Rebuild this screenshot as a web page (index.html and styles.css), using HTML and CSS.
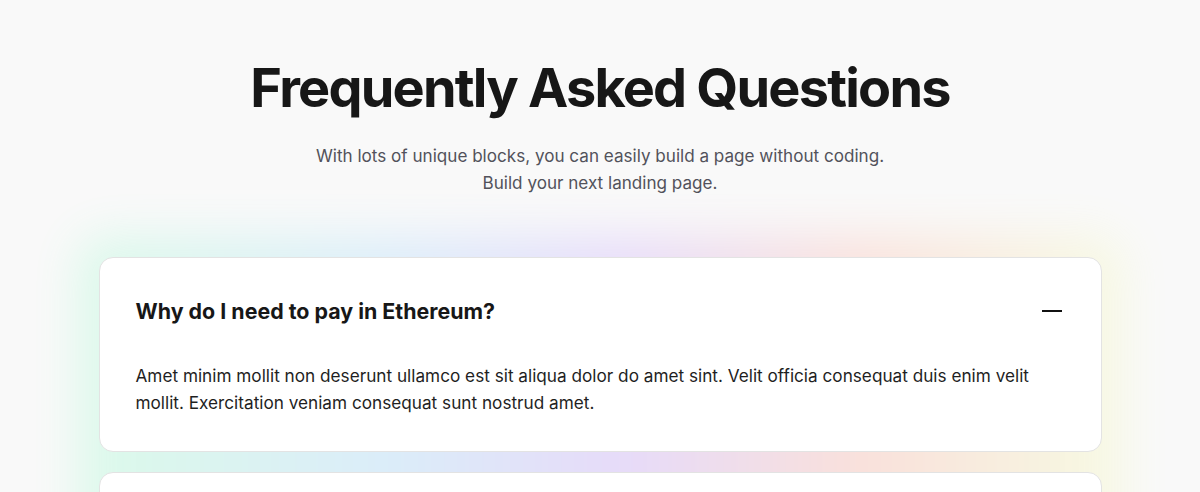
FILE: index.html
```html
<!DOCTYPE html>
<html lang="en">
<head>
<meta charset="utf-8">
<title>FAQ</title>
<link rel="stylesheet" href="styles.css">
</head>
<body>
<section class="faq">
  <header class="faq-head">
    <h1 class="faq-title">Frequently Asked Questions</h1>
    <p class="faq-sub">With lots of unique blocks, you can easily build a page without coding.<br>Build your next landing page.</p>
  </header>
  <div class="faq-list-wrap">
    <div class="faq-glow"></div>
    <div class="faq-list">
      <div class="faq-item">
        <div class="faq-q">
          <span class="faq-q-text">Why do I need to pay in Ethereum?</span>
          <svg class="faq-icon" width="24" height="24" viewBox="0 0 24 24" fill="none"><path d="M2 12h20" stroke="#111111" stroke-width="2"/></svg>
        </div>
        <p class="faq-a">Amet minim mollit non deserunt ullamco est sit aliqua dolor do amet sint. Velit officia consequat duis enim velit mollit. Exercitation veniam consequat sunt nostrud amet.</p>
      </div>
      <div class="faq-item faq-item-next"></div>
    </div>
  </div>
</section>
</body>
</html>
```
FILE: styles.css
```css
* { box-sizing: border-box; }
html, body { margin: 0; padding: 0; }
body {
  background: #f9f9f9;
  font-family: Inter, "Noto Sans", sans-serif;
  color: #111111;
  overflow: hidden;
  height: 492px;
}
.faq {
  padding-top: 57px;
}
.faq-head {
  text-align: center;
}
.faq-title {
  margin: 0;
  font-size: 54px;
  line-height: 62px;
  font-weight: 700;
  letter-spacing: -0.033em;
  color: #171717;
}
.faq-sub {
  margin: 23px 0 0;
  font-size: 17.1px;
  line-height: 27px;
  color: #52525b;
}
.faq-list-wrap {
  position: relative;
  width: 1003px;
  margin: 61px auto 0;
}
.faq-glow {
  position: absolute;
  left: -20px;
  right: -20px;
  top: -20px;
  bottom: -40px;
  background: linear-gradient(90deg, #44ff9a 0%, #44b0ff 30%, #8b44ff 52%, #ff6644 75%, #ebff70 100%);
  filter: blur(24px);
  opacity: 0.16;
  border-radius: 24px;
}
.faq-list {
  position: relative;
  display: flex;
  flex-direction: column;
  gap: 20px;
}
.faq-item {
  background: #ffffff;
  border: 1px solid #e3e3e3;
  border-radius: 14px;
  padding: 36px 36px 35px;
}
.faq-item-next {
  height: 106px;
}
.faq-q {
  display: flex;
  align-items: center;
  justify-content: space-between;
  height: 34px;
}
.faq-q-text {
  font-size: 21.4px;
  line-height: 34px;
  font-weight: 700;
  color: #171717;
}
.faq-icon {
  display: block;
  margin-right: 1px;
}
.faq-a {
  margin: 34px 0 0;
  font-size: 17.2px;
  line-height: 27px;
  color: #1f1f1f;
}
```
